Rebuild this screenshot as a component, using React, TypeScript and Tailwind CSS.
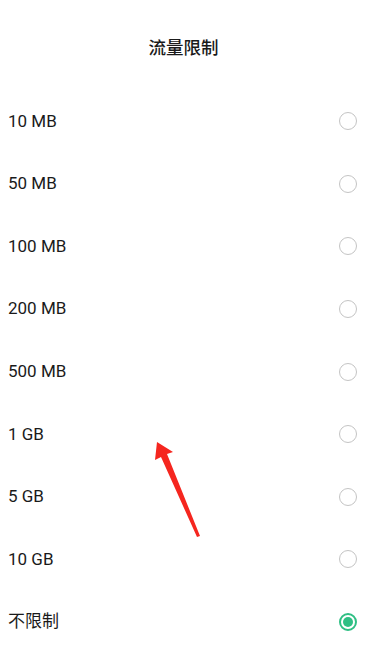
const options = ["10 MB", "50 MB", "100 MB", "200 MB", "500 MB", "1 GB", "5 GB", "10 GB", "不限制"];

function Radio({ checked }: { checked: boolean }) {
  if (checked) {
    return (
      <div className="w-[18px] h-[18px] rounded-full border-[2px] border-[#2fbf84] flex items-center justify-center">
        <div className="w-[10px] h-[10px] rounded-full bg-[#2fbf84]" />
      </div>
    );
  }
  return <div className="w-[18px] h-[18px] rounded-full border-[1.5px] border-[#c4c4c4]" />;
}

export default function App() {
  return (
    <div
      className="relative w-[375px] h-[660px] bg-white overflow-hidden text-[#1a1a1a]"
      style={{ fontFamily: '"Roboto", "Noto Sans CJK SC", sans-serif' }}
    >
      <div className="h-[90px] pt-[38px] flex justify-center">
        <span className="text-[17.5px] leading-[20px] font-medium pr-[8px]">流量限制</span>
      </div>

      <div className="flex flex-col">
        {options.map((o, i) => (
          <div key={o} className="h-[62.6px] flex items-center justify-between pl-[8px] pr-[18px]">
            <span className="text-[17px]">{o}</span>
            <Radio checked={i === options.length - 1} />
          </div>
        ))}
      </div>

      {/* annotation arrow */}
      <svg className="absolute left-0 top-0 pointer-events-none" width="375" height="660">
        <polygon points="157,442 173,452 167,454 200,536 197,537 161,457 155,460" fill="#f5261f" />
      </svg>
    </div>
  );
}
